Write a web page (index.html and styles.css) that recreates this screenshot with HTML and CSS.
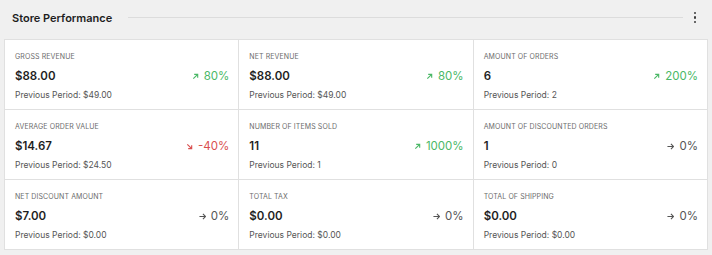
FILE: index.html
```html
<!DOCTYPE html>
<html lang="en">

<head>
	<meta charset="UTF-8">
	<title>Store Performance</title>
	<link rel="stylesheet" href="styles.css">
</head>

<body>
	<div class="section">
		<div class="section-header">
			<h2 class="section-title">Store Performance</h2>
			<span class="section-rule"></span>
			<button class="menu-button" aria-label="Options">
				<span></span><span></span><span></span>
			</button>
		</div>

		<div class="performance-grid">
			<div class="stat">
				<div class="stat-label">Gross Revenue</div>
				<div class="stat-row">
					<span class="stat-value">$88.00</span>
					<span class="stat-delta up"><svg viewBox="0 0 8 8"><path d="M1.5 6.5L6.5 1.5M2.5 1.5h4v4" /></svg>80%</span>
				</div>
				<div class="stat-prev">Previous Period: $49.00</div>
			</div>
			<div class="stat">
				<div class="stat-label">Net Revenue</div>
				<div class="stat-row">
					<span class="stat-value">$88.00</span>
					<span class="stat-delta up"><svg viewBox="0 0 8 8"><path d="M1.5 6.5L6.5 1.5M2.5 1.5h4v4" /></svg>80%</span>
				</div>
				<div class="stat-prev">Previous Period: $49.00</div>
			</div>
			<div class="stat">
				<div class="stat-label">Amount of Orders</div>
				<div class="stat-row">
					<span class="stat-value">6</span>
					<span class="stat-delta up"><svg viewBox="0 0 8 8"><path d="M1.5 6.5L6.5 1.5M2.5 1.5h4v4" /></svg>200%</span>
				</div>
				<div class="stat-prev">Previous Period: 2</div>
			</div>

			<div class="stat">
				<div class="stat-label">Average Order Value</div>
				<div class="stat-row">
					<span class="stat-value">$14.67</span>
					<span class="stat-delta down"><svg viewBox="0 0 8 8"><path d="M1.5 1.5L6.5 6.5M6.5 2.5v4h-4" /></svg>-40%</span>
				</div>
				<div class="stat-prev">Previous Period: $24.50</div>
			</div>
			<div class="stat">
				<div class="stat-label">Number of Items Sold</div>
				<div class="stat-row">
					<span class="stat-value">11</span>
					<span class="stat-delta up"><svg viewBox="0 0 8 8"><path d="M1.5 6.5L6.5 1.5M2.5 1.5h4v4" /></svg>1000%</span>
				</div>
				<div class="stat-prev">Previous Period: 1</div>
			</div>
			<div class="stat">
				<div class="stat-label">Amount of Discounted Orders</div>
				<div class="stat-row">
					<span class="stat-value">1</span>
					<span class="stat-delta flat"><svg viewBox="0 0 8 8"><path d="M0.5 4h7M4.5 1l3 3-3 3" /></svg>0%</span>
				</div>
				<div class="stat-prev">Previous Period: 0</div>
			</div>

			<div class="stat">
				<div class="stat-label">Net Discount Amount</div>
				<div class="stat-row">
					<span class="stat-value">$7.00</span>
					<span class="stat-delta flat"><svg viewBox="0 0 8 8"><path d="M0.5 4h7M4.5 1l3 3-3 3" /></svg>0%</span>
				</div>
				<div class="stat-prev">Previous Period: $0.00</div>
			</div>
			<div class="stat">
				<div class="stat-label">Total Tax</div>
				<div class="stat-row">
					<span class="stat-value">$0.00</span>
					<span class="stat-delta flat"><svg viewBox="0 0 8 8"><path d="M0.5 4h7M4.5 1l3 3-3 3" /></svg>0%</span>
				</div>
				<div class="stat-prev">Previous Period: $0.00</div>
			</div>
			<div class="stat">
				<div class="stat-label">Total of Shipping</div>
				<div class="stat-row">
					<span class="stat-value">$0.00</span>
					<span class="stat-delta flat"><svg viewBox="0 0 8 8"><path d="M0.5 4h7M4.5 1l3 3-3 3" /></svg>0%</span>
				</div>
				<div class="stat-prev">Previous Period: $0.00</div>
			</div>
		</div>
	</div>
</body>

</html>
```

FILE: styles.css
```css
body {
	margin: 0;
	background-color: #f0f0f0;
	font-family: Inter, "Noto Sans", sans-serif;
	color: #1e1e1e;
}

.section {
	padding: 0 4px;
}

.section-header {
	display: flex;
	align-items: center;
	height: 35px;
	margin-bottom: 4px;
	padding: 0 8px 0 8px;
}

.section-title {
	margin: 0;
	font-size: 11px;
	font-weight: 600;
	color: #1e1e1e;
}

.section-rule {
	flex: 1;
	height: 1px;
	margin: 0 11px 0 16px;
	background-color: #dcdcdc;
}

.menu-button {
	display: flex;
	flex-direction: column;
	gap: 2px;
	padding: 0;
	margin-right: 4px;
	border: 0;
	background: none;
	cursor: pointer;
}

.menu-button span {
	width: 2.5px;
	height: 2.5px;
	border-radius: 50%;
	background-color: #3c3c3c;
}

.performance-grid {
	display: grid;
	grid-template-columns: repeat(3, 1fr);
	grid-auto-rows: 70px;
	background-color: #fff;
	border-top: 1px solid #e0e0e0;
	border-left: 1px solid #e0e0e0;
}

.stat {
	padding: 12px 9px 0 10px;
	border-right: 1px solid #e0e0e0;
	border-bottom: 1px solid #e0e0e0;
}

.stat-label {
	font-size: 7px;
	line-height: 9px;
	text-transform: uppercase;
	letter-spacing: 0.1px;
	color: #6c6c6c;
}

.stat-row {
	display: flex;
	justify-content: space-between;
	align-items: center;
	margin-top: 8px;
	height: 14px;
}

.stat-value {
	font-size: 11.5px;
	font-weight: 600;
	color: #1e1e1e;
}

.stat-delta {
	display: flex;
	align-items: center;
	gap: 5px;
	font-size: 11.5px;
}

.stat-delta svg {
	width: 7px;
	height: 7px;
	fill: none;
	stroke: currentColor;
	stroke-width: 1.3;
}

.up {
	color: #4ab866;
}

.down {
	color: #d94f4f;
}

.flat {
	color: #555;
}

.stat-prev {
	margin-top: 7px;
	font-size: 8.5px;
	line-height: 11px;
	color: #555;
}
```
